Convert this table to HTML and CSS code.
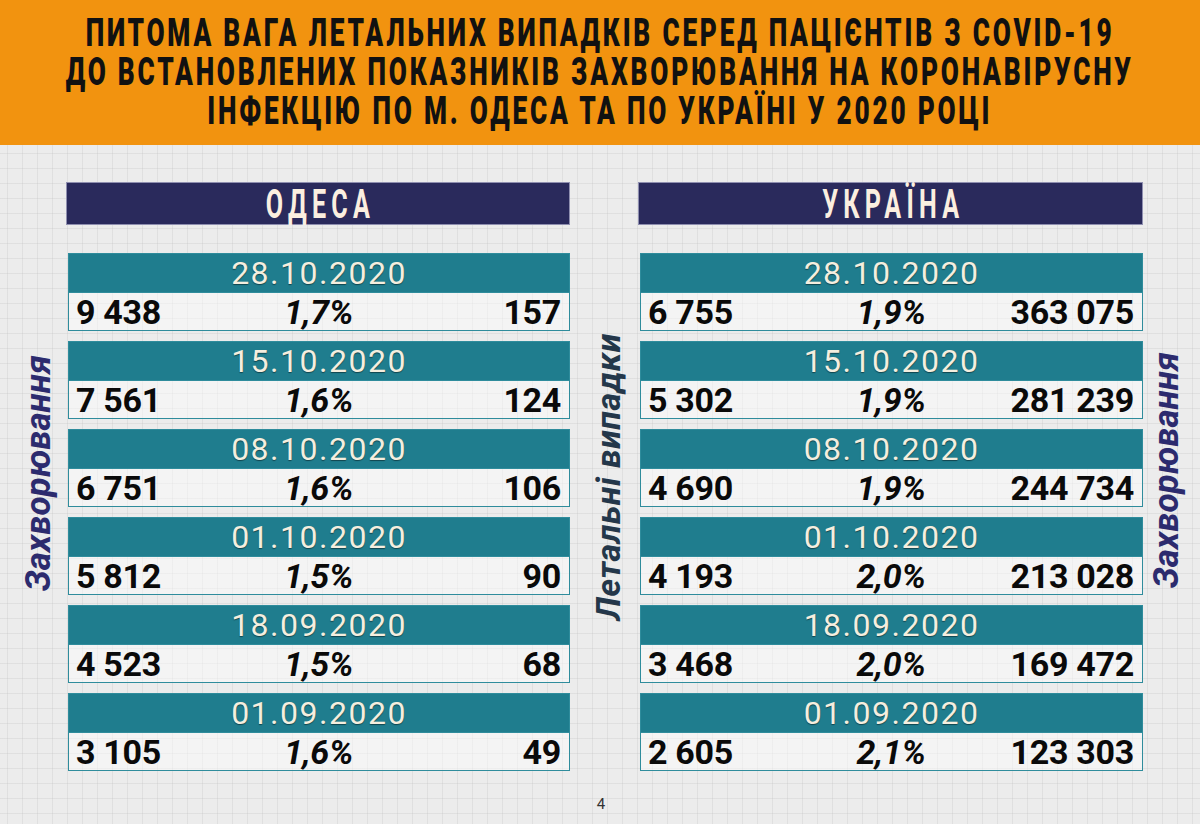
FILE: index.html
```html
<!DOCTYPE html>
<html lang="uk">
<head>
<meta charset="utf-8">
<title>Питома вага летальних випадків</title>
<link rel="stylesheet" href="styles.css">
</head>
<body>
<header class="banner">
  <div class="title-line">ПИТОМА ВАГА ЛЕТАЛЬНИХ ВИПАДКІВ СЕРЕД ПАЦІЄНТІВ З COVID-19</div>
  <div class="title-line">ДО ВСТАНОВЛЕНИХ ПОКАЗНИКІВ ЗАХВОРЮВАННЯ НА КОРОНАВІРУСНУ</div>
  <div class="title-line">ІНФЕКЦІЮ ПО М. ОДЕСА ТА ПО УКРАЇНІ У 2020 РОЦІ</div>
</header>
<main class="board">
  <div class="side side-left"><span class="vlabel navy">Захворювання</span></div>
  <section class="panel">
    <div class="panel-head"><span>ОДЕСА</span></div>
    <div class="cards">
      <div class="card"><div class="date">28.10.2020</div><div class="row"><span class="a">9 438</span><span class="p">1,7%</span><span class="b">157</span></div></div>
      <div class="card"><div class="date">15.10.2020</div><div class="row"><span class="a">7 561</span><span class="p">1,6%</span><span class="b">124</span></div></div>
      <div class="card"><div class="date">08.10.2020</div><div class="row"><span class="a">6 751</span><span class="p">1,6%</span><span class="b">106</span></div></div>
      <div class="card"><div class="date">01.10.2020</div><div class="row"><span class="a">5 812</span><span class="p">1,5%</span><span class="b">90</span></div></div>
      <div class="card"><div class="date">18.09.2020</div><div class="row"><span class="a">4 523</span><span class="p">1,5%</span><span class="b">68</span></div></div>
      <div class="card"><div class="date">01.09.2020</div><div class="row"><span class="a">3 105</span><span class="p">1,6%</span><span class="b">49</span></div></div>
    </div>
  </section>
  <div class="side side-mid"><span class="vlabel slate">Летальні випадки</span></div>
  <section class="panel">
    <div class="panel-head"><span>УКРАЇНА</span></div>
    <div class="cards">
      <div class="card"><div class="date">28.10.2020</div><div class="row"><span class="a">6 755</span><span class="p">1,9%</span><span class="b">363 075</span></div></div>
      <div class="card"><div class="date">15.10.2020</div><div class="row"><span class="a">5 302</span><span class="p">1,9%</span><span class="b">281 239</span></div></div>
      <div class="card"><div class="date">08.10.2020</div><div class="row"><span class="a">4 690</span><span class="p">1,9%</span><span class="b">244 734</span></div></div>
      <div class="card"><div class="date">01.10.2020</div><div class="row"><span class="a">4 193</span><span class="p">2,0%</span><span class="b">213 028</span></div></div>
      <div class="card"><div class="date">18.09.2020</div><div class="row"><span class="a">3 468</span><span class="p">2,0%</span><span class="b">169 472</span></div></div>
      <div class="card"><div class="date">01.09.2020</div><div class="row"><span class="a">2 605</span><span class="p">2,1%</span><span class="b">123 303</span></div></div>
    </div>
  </section>
  <div class="side side-right"><span class="vlabel navy">Захворювання</span></div>
</main>
<footer class="page-num">4</footer>
</body>
</html>
```
FILE: styles.css
```css
* { box-sizing: border-box; }
html, body { margin: 0; padding: 0; }
body {
  width: 1200px;
  height: 824px;
  overflow: hidden;
  font-family: Roboto, "Liberation Sans", sans-serif;
  background-color: #ececec;
  background-image:
    linear-gradient(to right, rgba(200,200,200,0.35) 1px, transparent 1px),
    linear-gradient(to bottom, rgba(200,200,200,0.35) 1px, transparent 1px);
  background-size: 15px 15px;
  background-position: 7px 3px;
}
.banner {
  height: 145px;
  background: #f2930f;
  display: flex;
  flex-direction: column;
  align-items: center;
  justify-content: center;
  padding-bottom: 2px;
}
.title-line {
  font-family: Roboto, "Liberation Sans", sans-serif;
  font-weight: 900;
  font-size: 33px;
  line-height: 39px;
  letter-spacing: 3.5px;
  color: #111;
  white-space: nowrap;
  transform: scale(0.795, 1.2);
}
.board {
  display: grid;
  grid-template-columns: 66px 504px 68px 505px 57px;
  margin-top: 37px;
}
.side {
  display: flex;
  align-items: center;
}
.side-left { justify-content: center; padding-left: 10px; padding-bottom: 6px; }
.side-mid { justify-content: center; padding-left: 8px; }
.side-right { justify-content: center; padding-right: 10px; padding-bottom: 12px; }
.vlabel {
  writing-mode: vertical-rl;
  transform: rotate(180deg);
  font-weight: 700;
  font-style: italic;
  font-size: 35px;
  line-height: 1;
  white-space: nowrap;
}
.navy { color: #2c2b6e; }
.slate { color: #24374a; font-size: 34px; letter-spacing: 0.5px; }
.panel-head {
  height: 43px;
  background: #2a2a5c;
  border: 1px solid #8f8fb0;
  display: flex;
  align-items: center;
  justify-content: center;
}
.panel-head span {
  display: inline-block;
  font-weight: 700;
  font-size: 38px;
  letter-spacing: 8px;
  padding-left: 8px;
  color: #fbefe0;
  transform: scale(0.66, 1.05);
}
.cards {
  margin-top: 28px;
  display: flex;
  flex-direction: column;
  gap: 10px;
}
.card {
  border: 1.5px solid #2f8c9c;
  margin-left: 2px;
}
.date {
  height: 38px;
  background: #1f7d8e;
  color: #f4eedf;
  font-size: 32px;
  line-height: 39px;
  letter-spacing: 1.5px;
  text-align: center;
  text-shadow: 0 1px 1px rgba(0,0,0,0.45);
}
.row {
  height: 38px;
  background: rgba(255,255,255,0.45);
  border-top: 1.5px solid #2f8c9c;
  display: grid;
  grid-template-columns: 1fr auto 1fr;
  align-items: center;
  padding: 0 8px 0 7px;
  color: #0a0a0a;
  font-weight: 700;
  font-size: 34px;
  line-height: 36px;
  letter-spacing: -0.3px;
}
.row .a { justify-self: start; }
.row .p { justify-self: center; font-style: italic; }
.row .b { justify-self: end; }
.page-num {
  text-align: center;
  font-size: 15px;
  color: #333;
  margin-top: 24px;
  padding-left: 2px;
}
```
